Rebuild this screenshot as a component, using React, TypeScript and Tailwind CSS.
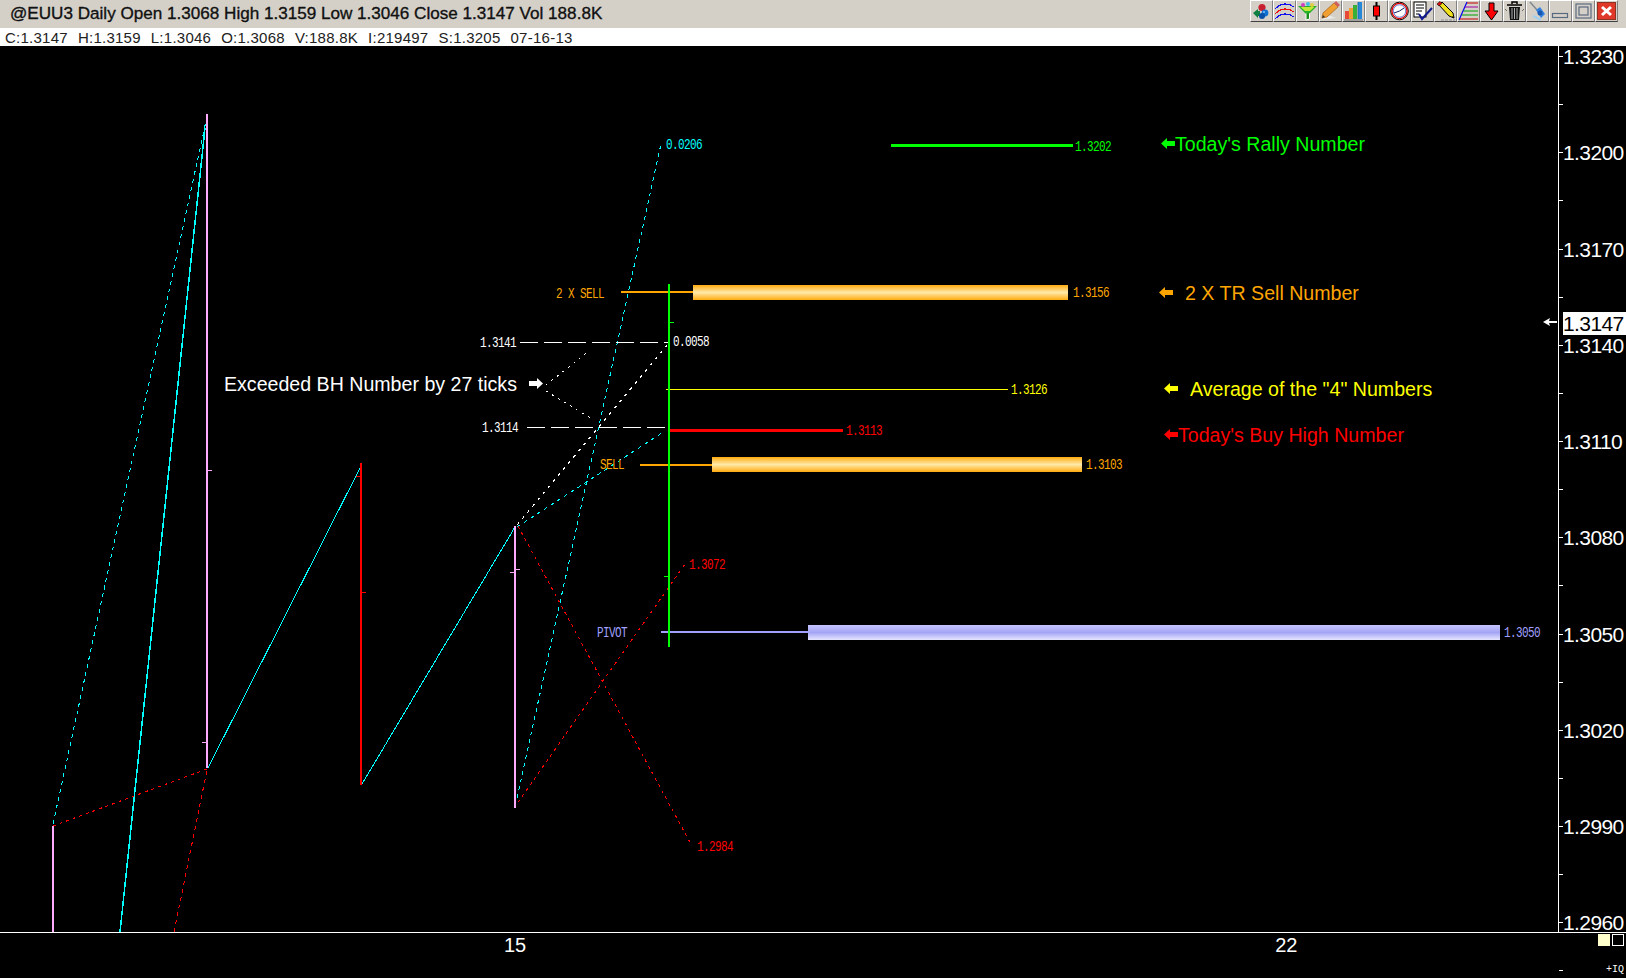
import React from "react";

const Btn = ({ children }: { children: React.ReactNode }) => (
  <div className="w-[23px] h-[22px] box-border border border-t-white border-l-white border-r-[#808080] border-b-[#404040] bg-[#d4d0c8] flex items-center justify-center">
    <svg width="21" height="20" viewBox="0 0 21 20">{children}</svg>
  </div>
);

const icons: React.ReactNode[] = [
  <g key="1">
    <path d="M2 12 L7 8 L7 10 L9 10 L9 15 L7 15 L7 17 Z" fill="#108040" />
    <circle cx="11" cy="6.5" r="3.6" fill="#c82030" />
    <circle cx="14" cy="12" r="3.4" fill="#1070d0" />
    <circle cx="11" cy="15" r="3" fill="#0850a8" />
    <circle cx="13" cy="11" r="1" fill="#80c0ff" />
  </g>,
  <g key="2" fill="none" strokeWidth="1.2" shapeRendering="crispEdges">
    <path d="M1 8 Q10 -1 20 6" stroke="#1010f0" />
    <path d="M1 13 Q10 4 20 11" stroke="#f01010" />
    <path d="M1 18 Q10 9 20 16" stroke="#1010f0" />
  </g>,
  <g key="3">
    <path d="M12.5 12 V18 L9 19 V12" fill="#189018" stroke="#ffffff" strokeWidth="1" />
    <path d="M1 5 H20 L12.5 12.5 H8.5 Z" fill="#28b028" />
    <path d="M3.5 6 H17.5 L13 10 H8 Z" fill="#c0e838" />
    <circle cx="6" cy="4" r="2" fill="#d040c0" />
    <circle cx="11" cy="3" r="2" fill="#40c0e0" />
    <circle cx="15" cy="4" r="2" fill="#e0d040" />
  </g>,
  <g key="4">
    <path d="M1 19 L16 17 L8 14 Z" fill="#e8e8e8" />
    <path d="M2 17 L3 12 L14 2 L18 6 L7 16 Z" fill="#f0a030" stroke="#b06820" strokeWidth="0.8" />
    <path d="M14 2 L16 0 L20 4 L18 6 Z" fill="#d06060" />
    <path d="M2 17 L3 14 L5 16 Z" fill="#303030" />
  </g>,
  <g key="5">
    <path d="M1 19 H20" stroke="#909090" strokeWidth="1.5" />
    <rect x="2" y="10" width="4" height="8" fill="#e84838" />
    <rect x="6" y="7" width="4" height="11" fill="#f0a030" />
    <rect x="10" y="4" width="4" height="14" fill="#38b038" />
    <rect x="15" y="1" width="4" height="17" fill="#2888d8" />
    <path d="M15 1 V18" stroke="#106898" strokeWidth="0.8" />
  </g>,
  <g key="6">
    <path d="M10.5 1 V19" stroke="#000" strokeWidth="2" />
    <rect x="7.5" y="5" width="6" height="10" fill="#ff0000" stroke="#000" strokeWidth="1" />
  </g>,
  <g key="7">
    <circle cx="10.5" cy="10" r="8.8" fill="#ffffff" stroke="#000" strokeWidth="1" />
    <circle cx="10.5" cy="10" r="7.6" fill="none" stroke="#e00000" strokeWidth="1.4" />
    <circle cx="10.5" cy="10" r="6.2" fill="none" stroke="#1030c0" strokeWidth="0.6" />
    <path d="M5 12 L10.5 10 L15 7" stroke="#102060" strokeWidth="1" fill="none" />
  </g>,
  <g key="8">
    <rect x="2" y="1" width="12" height="15" fill="#fff" stroke="#000" strokeWidth="1" />
    <path d="M4 4 H12 M4 7 H12 M4 10 H10 M4 13 H7" stroke="#000" strokeWidth="1" />
    <path d="M7 13 L10 18 L20 7" stroke="#101890" strokeWidth="2" fill="none" />
  </g>,
  <g key="9">
    <path d="M6 19 H20" stroke="#909090" strokeWidth="1" strokeDasharray="3 1" />
    <path d="M4 4 L7 1 L18 12 L19 17 L14 15 Z" fill="#f0e020" stroke="#000" strokeWidth="1" />
    <path d="M2 3 L5 0.5 L7 2.5 L4 5 Z" fill="#e01010" stroke="#000" strokeWidth="0.6" />
    <path d="M17 16 L19 17 L18 15 Z" fill="#000" />
  </g>,
  <g key="10" strokeWidth="1" fill="none">
    <path d="M1 19 L9 1" stroke="#0000f0" strokeWidth="1.2" />
    <path d="M9 2 H20" stroke="#c00000" />
    <path d="M7 6 H20" stroke="#a000a0" />
    <path d="M5.5 10 H20" stroke="#00a000" />
    <path d="M4 14 H20" stroke="#00a000" />
    <path d="M2 18 H20" stroke="#c00000" />
  </g>,
  <g key="11">
    <path d="M8 2 H13 V10 H17 L10.5 19 L4 10 H8 Z" fill="#ff0000" stroke="#000" strokeWidth="1" />
  </g>,
  <g key="12">
    <path d="M3 4 H18 M8 3 V1 H13 V3" stroke="#000" strokeWidth="1.5" fill="none" />
    <path d="M5 6 H16 L15 19 H6 Z" fill="#101010" />
    <path d="M8 7 V18 M10.5 7 V18 M13 7 V18" stroke="#b0b0b0" strokeWidth="1" />
    <path d="M1 8 L3 10 M20 8 L18 10" stroke="#505050" strokeWidth="0.8" />
  </g>,
  <g key="13">
    <path d="M3 1 L10 9" stroke="#808890" strokeWidth="1.5" />
    <path d="M9 9 L13 6 L18 13 L14 17 Z" fill="#3080e0" />
    <path d="M6 15 L10 17 L14 19" stroke="#a0d0f0" strokeWidth="2" fill="none" />
    <circle cx="13" cy="12" r="2.5" fill="#1858b0" />
  </g>,
  <g key="14">
    <rect x="2.5" y="12.5" width="15" height="4" fill="none" stroke="#5a6a80" strokeWidth="1.2" />
  </g>,
  <g key="15">
    <rect x="3" y="3" width="15" height="14" fill="none" stroke="#5a6a80" strokeWidth="1.2" />
    <rect x="6" y="6" width="9" height="8" fill="none" stroke="#5a6a80" strokeWidth="1.2" />
  </g>,
  <g key="16">
    <rect x="1.5" y="1.5" width="18" height="17" fill="#e03828" stroke="#903020" strokeWidth="1" />
    <path d="M6 6 L15 14 M15 6 L6 14" stroke="#fff" strokeWidth="3" />
  </g>,
];

const Line = ({ p, c, w = 1, dash }: { p: number[]; c: string; w?: number; dash?: string }) => (
  <line x1={p[0]} y1={p[1]} x2={p[2]} y2={p[3]} stroke={c} strokeWidth={w} strokeDasharray={dash} />
);

const AXIS = ["1.3230", "1.3200", "1.3170", "1.3140", "1.3110", "1.3080", "1.3050", "1.3020", "1.2990", "1.2960"];
const INFO = ["C:1.3147", "H:1.3159", "L:1.3046", "O:1.3068", "V:188.8K", "I:219497", "S:1.3205", "07-16-13"];
const PINK = "#ffaaff";
const CYAN = "#00ffff";
const ORANGE = "#ffa500";
const LAV = "#a0a0ff";

const TAGS: [string, number, number, string][] = [
  ["0.0206", 666, 146, CYAN],
  ["1.3202", 1075, 148, "#00ff00"],
  ["2 X SELL", 556, 295, ORANGE],
  ["1.3156", 1073, 294, ORANGE],
  ["1.3141", 480, 344, "#ffffff"],
  ["0.0058", 673, 343, "#ffffff"],
  ["1.3126", 1011, 391, "#ffff00"],
  ["1.3114", 482, 429, "#ffffff"],
  ["1.3113", 846, 432, "#ff0000"],
  ["SELL", 600, 466, ORANGE],
  ["1.3103", 1086, 466, ORANGE],
  ["1.3072", 689, 566, "#ff0000"],
  ["PIVOT", 597, 634, LAV],
  ["1.3050", 1504, 634, LAV],
  ["1.2984", 697, 848, "#ff0000"],
];

const NOTES: [string, number, number, string, number | null][] = [
  ["Exceeded BH Number by 27 ticks", 224, 384, "#ffffff", null],
  ["Today's Rally Number", 1175, 144, "#00ff00", 1161],
  ["2 X TR Sell Number", 1185, 293, ORANGE, 1159],
  ['Average of the "4" Numbers', 1190, 389, "#ffff00", 1164],
  ["Today's Buy High Number", 1178, 435, "#ff0000", 1164],
];

function Chart() {
  return (
    <svg className="block" width="1558" height="886" viewBox="0 46 1558 886" shapeRendering="crispEdges">
      <defs>
        <linearGradient id="orangeBar" x1="0" y1="0" x2="0" y2="1">
          <stop offset="0" stopColor="#ffab10" />
          <stop offset="0.5" stopColor="#ffe9a8" />
          <stop offset="1" stopColor="#ffab10" />
        </linearGradient>
        <linearGradient id="pivotBar" x1="0" y1="0" x2="0" y2="1">
          <stop offset="0" stopColor="#c4c4ff" />
          <stop offset="0.5" stopColor="#a4a4f4" />
          <stop offset="1" stopColor="#e6e6ff" />
        </linearGradient>
      </defs>

      <Line p={[120, 932, 205, 128]} c={CYAN} w={1.5} />
      <Line p={[208, 768, 361, 466]} c={CYAN} />
      <Line p={[362, 784, 515, 527]} c={CYAN} />

      <Line p={[53, 824, 206, 121]} c={CYAN} dash="4 4" />
      <Line p={[517, 798, 661, 144]} c={CYAN} dash="4 4" />
      <Line p={[517, 527, 665, 431]} c={CYAN} dash="4 4" />
      <Line p={[53, 826, 207, 769]} c="#ff0000" dash="3 4" />
      <Line p={[174, 932, 207, 770]} c="#ff0000" dash="4 4" />
      <Line p={[514, 808, 685, 564]} c="#ff0000" dash="3 4" />
      <Line p={[518, 526, 692, 846]} c="#ff0000" dash="3 4" />
      <Line p={[517, 525, 668, 344]} c="#ffffff" dash="3 5" />
      <Line p={[546, 385, 589, 351]} c="#ffffff" dash="2 5" />
      <Line p={[546, 391, 592, 419]} c="#ffffff" dash="2 5" />

      <Line p={[520, 342, 668, 342]} c="#ffffff" dash="18 6" />
      <Line p={[527, 427, 665, 427]} c="#ffffff" dash="18 6" />

      <rect x="52" y="826" width="2" height="106" fill={PINK} />
      <rect x="206" y="114" width="2" height="654" fill={PINK} />
      <rect x="208" y="470" width="4" height="1" fill={PINK} />
      <rect x="202" y="742" width="4" height="1" fill={PINK} />
      <rect x="514" y="526" width="2" height="282" fill={PINK} />
      <rect x="516" y="569" width="4" height="1" fill={PINK} />
      <rect x="510" y="572" width="4" height="1" fill={PINK} />

      <rect x="360" y="463" width="2" height="322" fill="#ff0000" />
      <rect x="356" y="476" width="4" height="1" fill="#ff0000" />
      <rect x="362" y="592" width="4" height="1" fill="#ff0000" />

      <rect x="891" y="144" width="182" height="3" fill="#00ff00" />

      <rect x="621" y="291" width="72" height="2" fill={ORANGE} />
      <rect x="693" y="285" width="375" height="15" fill="url(#orangeBar)" />
      <rect x="640" y="464" width="72" height="2" fill={ORANGE} />
      <rect x="712" y="457" width="370" height="15" fill="url(#orangeBar)" />
      <rect x="661" y="631" width="147" height="2" fill={LAV} />
      <rect x="808" y="625" width="692" height="15" fill="url(#pivotBar)" />

      <rect x="666" y="389" width="342" height="1" fill="#ffff00" />
      <rect x="670" y="429" width="173" height="3" fill="#ff0000" />

      <rect x="668" y="284" width="2" height="363" fill="#00ff00" />
      <rect x="670" y="322" width="4" height="1" fill="#00ff00" />
      <rect x="664" y="576" width="4" height="1" fill="#00ff00" />

      <path d="M1543 322 L1550 318 L1549 321 H1557 V323 H1549 L1550 326 Z" fill="#ffffff" shapeRendering="auto" />

      {TAGS.map(([t, x, y, c]) => (
        <text
          key={t + x}
          transform={`translate(${x} ${y}) scale(1 1.25)`}
          dominantBaseline="central"
          fill={c}
          className="font-['Liberation_Mono',monospace] text-[11px] tracking-[-0.6px]"
        >
          {t}
        </text>
      ))}

      {NOTES.map(([t, x, y, c, ax]) => (
        <g key={t}>
          <text x={x} y={y} dominantBaseline="central" fill={c} className="font-['Liberation_Sans',Arial,sans-serif] text-[19.6px]">
            {t}
          </text>
          {ax !== null && (
            <path transform={`translate(${ax} ${y - 6})`} d="M0 5.5 L6 0 V3 H14 V8 H6 V11 Z" fill={c} shapeRendering="auto" />
          )}
        </g>
      ))}
      <path transform="translate(529 378)" d="M14 5.5 L8 0 V3 H0 V8 H8 V11 Z" fill="#ffffff" shapeRendering="auto" />
    </svg>
  );
}

export default function App() {
  return (
    <div className="w-[1626px] h-[978px] flex flex-col bg-black overflow-hidden font-['Liberation_Sans',Arial,sans-serif]">
      <header className="h-[28px] shrink-0 bg-[#d4d0c8] flex items-start justify-between pl-[10px] pr-[8px]">
        <div className="h-[28px] flex items-center text-[17.1px] text-[#111] [-webkit-text-stroke:0.35px_#111] whitespace-nowrap">
          @EUU3 Daily Open 1.3068 High 1.3159 Low 1.3046 Close 1.3147 Vol 188.8K
        </div>
        <div className="flex">
          {icons.map((ic, i) => (
            <Btn key={i}>{ic}</Btn>
          ))}
        </div>
      </header>

      <div className="h-[18px] shrink-0 bg-white flex items-center gap-[10px] pl-[5px] text-[15px] tracking-[0.25px] text-[#222] leading-none whitespace-nowrap">
        {INFO.map((t) => (
          <span key={t}>{t}</span>
        ))}
      </div>

      <main className="h-[886px] shrink-0 flex">
        <section className="w-[1558px] shrink-0">
          <Chart />
        </section>

        <aside className="relative flex-1 border-l border-white pt-[10px] text-white text-[21px] tracking-[-0.6px]">
          {AXIS.map((v) => (
            <div key={v} className="flex flex-col">
              <div className="h-[48.125px] flex items-start">
                <div className="w-[4px] h-px bg-white shrink-0" />
                <span className="-mt-[11px] leading-[23px]">{v}</span>
              </div>
              <div className="h-[48.125px]">
                <div className="w-[4px] h-px bg-white" />
              </div>
            </div>
          ))}
          <div className="absolute left-[4px] right-0 top-[266px] h-[23px] bg-white text-black leading-[23px]">1.3147</div>
        </aside>
      </main>

      <footer className="flex-1 border-t border-white flex items-start text-white pl-[504px]">
        <span className="text-[20px] leading-[24px]">15</span>
        <span className="ml-[749px] text-[20px] leading-[24px]">22</span>
        <div className="ml-auto flex flex-col items-end pr-[2px] pt-[1px]">
          <div className="flex gap-[2px]">
            <div className="w-[12px] h-[12px] bg-[#ffffcc]" />
            <div className="w-[12px] h-[12px] border border-white" />
          </div>
          <span className="mt-[19px] font-['Liberation_Mono',monospace] text-[10px] leading-none">+IQ</span>
        </div>
      </footer>
    </div>
  );
}
